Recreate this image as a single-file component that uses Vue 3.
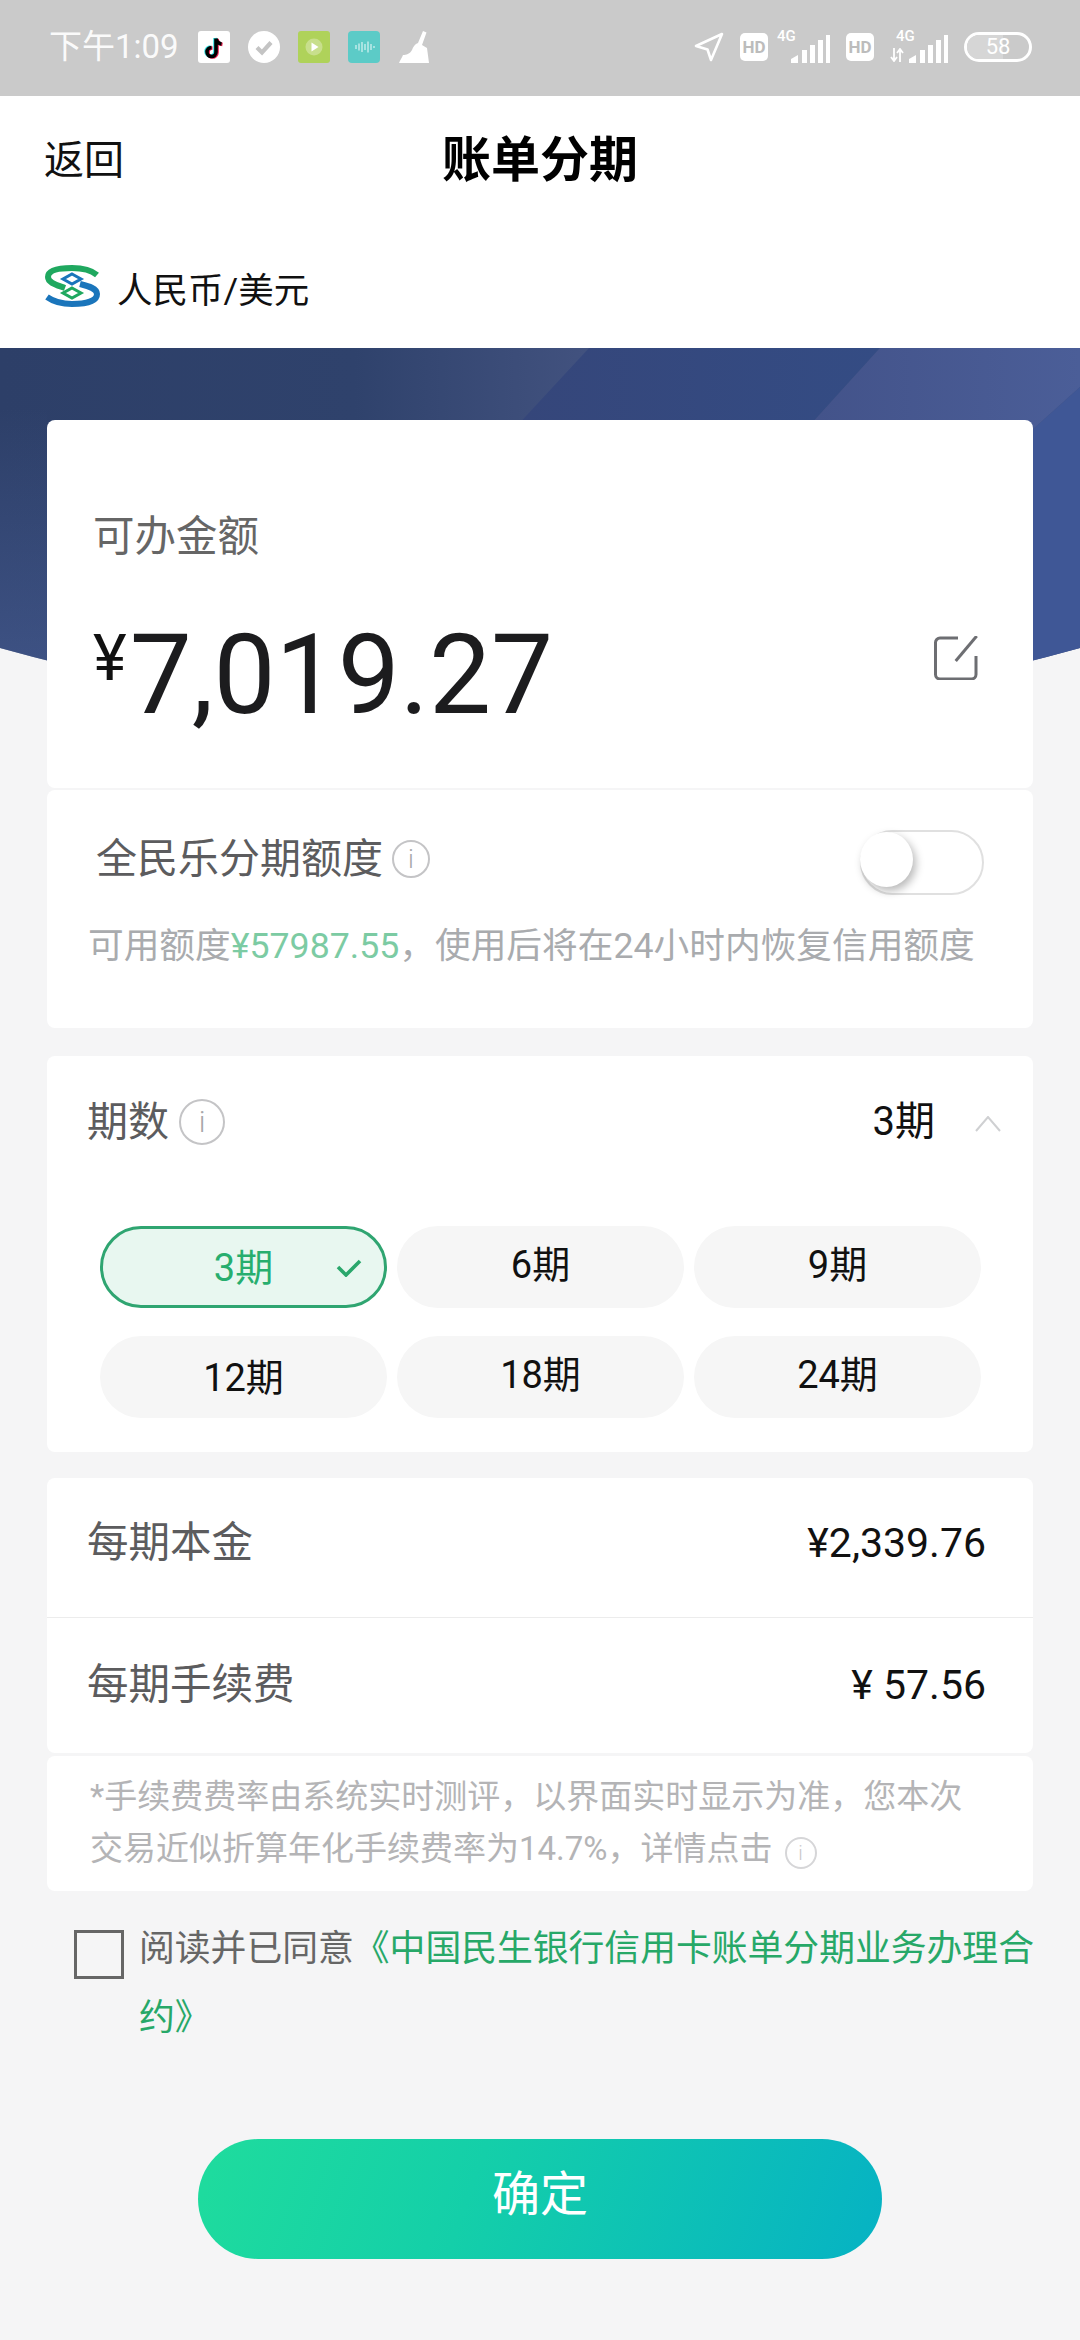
<template>
  <div class="page">
    <!-- status bar -->
    <div class="status-bar">
      <div class="status-left">
        <span class="time">下午1:09</span>
        <svg class="app-icon" viewBox="0 0 32 32">
          <rect width="32" height="32" rx="3" fill="#fff" />
          <path d="M17 7v13.500a4.500 4.500 0 1 1-4.500-4.500M17 7c.5 3 2.500 5 5.500 5.500" fill="none" stroke="#35e0e0" stroke-width="3.600" />
          <path d="M19 8v13.500a4.500 4.500 0 1 1-4.500-4.500M19 8c.5 3 2.500 5 5.500 5.500" fill="none" stroke="#ee1d52" stroke-width="3.600" />
          <path d="M18 7.500v13.500a4.500 4.500 0 1 1-4.500-4.500M18 7.500c.5 3 2.500 5 5.500 5.500" fill="none" stroke="#000" stroke-width="3.600" />
        </svg>
        <svg class="app-icon" viewBox="0 0 32 32">
          <circle cx="16" cy="16" r="16" fill="#fff" />
          <path d="M9 16.500l5 5 9-10" fill="none" stroke="#c4c4c4" stroke-width="4.200" />
        </svg>
        <svg class="app-icon" viewBox="0 0 32 32">
          <rect width="32" height="32" rx="3" fill="#afd25a" />
          <circle cx="16" cy="16" r="8.500" fill="#c8df8c" />
          <path d="M13.500 11.500l7 4.500-7 4.500z" fill="#fff" />
        </svg>
        <svg class="app-icon" viewBox="0 0 32 32">
          <rect width="32" height="32" rx="4" fill="#5ccbc7" />
          <path d="M8 14v4M11 12.500v7M14 11v10M17 13v6M20 10.500v11M23 13v6M26 15v2" stroke="#d8f4f2" stroke-width="1.200" fill="none" />
        </svg>
        <svg class="app-icon" viewBox="0 0 32 32">
          <path d="M20 12L25 0l3.500 1.500L24 14l5 3 2 15H1c1-3 3-5 4-8 3 0 7-1 9-5 1-3 3-6 6-7z" fill="#fff" />
        </svg>
      </div>
      <div class="status-right">
        <svg class="nav-arrow" viewBox="0 0 30 30">
          <path d="M2 14L28 2 17 28l-3.500-10.500z" fill="none" stroke="#fff" stroke-width="2.600" stroke-linejoin="round" />
        </svg>
        <span class="hd">HD</span>
        <div class="signal signal-voice">
          <span class="net">4G</span>
          <svg class="bars" viewBox="0 0 40 28">
            <path d="M1 28v-4l7-4v8zM12 28V15h5v13zM20 28V10h5v18zM28 28V5h5v23zM36 28V0h4v28z" fill="#fff" />
          </svg>
        </div>
        <span class="hd">HD</span>
        <div class="signal signal-data">
          <span class="net">4G</span>
          <svg class="updown" viewBox="0 0 14 14">
            <path d="M4 0v12M1 9l3 4 3-4M10 14V2M7 5l3-4 3 4" fill="none" stroke="#fff" stroke-width="1.800" />
          </svg>
          <svg class="bars" viewBox="0 0 40 28">
            <path d="M1 28v-4l7-4v8zM12 28V15h5v13zM20 28V10h5v18zM28 28V5h5v23zM36 28V0h4v28z" fill="#fff" />
          </svg>
        </div>
        <div class="battery">
          <span class="battery-fill"></span>
          <span class="battery-num">58</span>
        </div>
      </div>
    </div>

    <!-- header -->
    <div class="nav">
      <span class="back">返回</span>
      <span class="title">账单分期</span>
      <span></span>
    </div>
    <div class="currency">
      <svg class="bank-logo" viewBox="0 0 56 42">
        <path d="M53 10C46 4 37 3 28 3 14 3 4 5 4 12c0 6 9 8 17 11" fill="none" stroke="#1fa85f" stroke-width="6" />
        <path d="M3 32c7 5 17 7 25 7 14 0 25-3 25-10 0-6-9-8-17-10" fill="none" stroke="#1a75bb" stroke-width="6" />
        <path d="M28 9l9 5-9 5-9-5z" fill="none" stroke="#1a75bb" stroke-width="3" />
        <path d="M28 23l9 5-9 5-9-5z" fill="none" stroke="#1fa85f" stroke-width="3" />
      </svg>
      <span class="currency-name">人民币/美元</span>
    </div>

    <div class="main">
      <!-- blue backdrop behind the first card -->
      <svg class="hero-bg" viewBox="0 0 1080 380" preserveAspectRatio="none">
        <defs>
          <linearGradient id="facetA" gradientUnits="userSpaceOnUse" x1="0" y1="0" x2="590" y2="0">
            <stop offset="0" stop-color="#2d3f68" />
            <stop offset="0.6" stop-color="#2f426c" />
            <stop offset="1" stop-color="#42527f" />
          </linearGradient>
          <linearGradient id="facetB" gradientUnits="userSpaceOnUse" x1="520" y1="0" x2="880" y2="0">
            <stop offset="0" stop-color="#35467a" />
            <stop offset="1" stop-color="#344c84" />
          </linearGradient>
          <linearGradient id="facetC" gradientUnits="userSpaceOnUse" x1="816" y1="0" x2="1080" y2="0">
            <stop offset="0" stop-color="#43538a" />
            <stop offset="1" stop-color="#4b5e98" />
          </linearGradient>
          <linearGradient id="facetShade" x1="0" y1="0" x2="0" y2="1">
            <stop offset="0" stop-color="#4a6099" stop-opacity="0" />
            <stop offset="1" stop-color="#4a6099" stop-opacity="0.7" />
          </linearGradient>
          <clipPath id="heroClip">
            <path d="M0 0H1080V300Q540 450 0 300Z" />
          </clipPath>
        </defs>
        <g clip-path="url(#heroClip)">
          <rect width="1080" height="380" fill="url(#facetA)" />
          <rect y="60" width="47" height="320" fill="url(#facetShade)" />
          <path d="M589 0H880L536 380H237Z" fill="url(#facetB)" />
          <path d="M880 0H1080V39L700 380H536Z" fill="url(#facetC)" />
          <path d="M1080 39V380H700Z" fill="#3f5796" />
        </g>
      </svg>

      <section class="card amount-card">
        <div class="muted-label">可办金额</div>
        <div class="amount-row">
          <div class="amount"><span class="yen">¥</span>7,019.27</div>
          <svg class="edit-icon" viewBox="0 0 44 44">
            <path d="M24 2H6a4.500 4.500 0 0 0-4.500 4.500V38.500A4.500 4.500 0 0 0 6 43h31.500a4.500 4.500 0 0 0 4.500-4.500V20" fill="none" stroke="#6d6e72" stroke-width="3" />
            <path d="M21.700 25L42.700 0" fill="none" stroke="#6d6e72" stroke-width="3" />
          </svg>
        </div>
      </section>

      <section class="card quota-card">
        <div class="quota-row">
          <div class="quota-label">全民乐分期额度<span class="info info-md">i</span></div>
          <div class="switch"><span class="knob"></span></div>
        </div>
        <div class="quota-note">可用额度<span class="green-light">¥57987.55</span>，使用后将在24小时内恢复信用额度</div>
      </section>

      <section class="card period-card">
        <div class="period-head">
          <div class="period-label">期数<span class="info info-lg">i</span></div>
          <div class="period-value">
            <span>3期</span>
            <svg class="chevron" viewBox="0 0 26 16">
              <path d="M1 15L13 1l12 14" fill="none" stroke="#cfd0d2" stroke-width="2" />
            </svg>
          </div>
        </div>
        <div class="period-grid">
          <div
            v-for="(p, i) in periods"
            :key="p"
            class="pill"
            :class="{ active: p === selected, 'first-col': i % 3 === 0 }"
          >
            <span>{{ p }}期</span>
            <svg v-if="p === selected" class="check" viewBox="0 0 26 18">
              <path d="M2 8l8 8L24 2" fill="none" stroke="#2aa76c" stroke-width="3.600" />
            </svg>
          </div>
        </div>
      </section>

      <section class="card fee-card">
        <div v-for="row in feeRows" :key="row.label" class="fee-row">
          <span class="fee-label">{{ row.label }}</span>
          <span class="fee-value">{{ row.value }}</span>
        </div>
      </section>

      <section class="card note-card">
        <p>*手续费费率由系统实时测评，以界面实时显示为准，您本次<br />交易近似折算年化手续费率为14.7%，详情点击<span class="info info-sm">i</span></p>
      </section>

      <div class="agree">
        <span class="checkbox"></span>
        <p>阅读并已同意<span class="link">《中国民生银行信用卡账单分期业务办理合约》</span></p>
      </div>

      <div class="submit">确定</div>
    </div>
  </div>
</template>

<script setup>
const selected = 3
const periods = [3, 6, 9, 12, 18, 24]
const feeRows = [
  { label: '每期本金', value: '¥2,339.76' },
  { label: '每期手续费', value: '¥ 57.56' },
]
</script>

<style>
html,
body {
  margin: 0;
  background: #f5f5f6;
}
</style>

<style scoped>
.page {
  width: 1080px;
  height: 2340px;
  background: #f5f5f6;
  font-family: Roboto, "Noto Sans CJK SC", sans-serif;
  color: #111;
  overflow: hidden;
}

/* status bar */
.status-bar {
  height: 96px;
  background: #cacaca;
  display: flex;
  justify-content: space-between;
  align-items: center;
  padding: 0 48px 3px 49px;
  box-sizing: border-box;
  color: #fff;
}
.status-left,
.status-right {
  display: flex;
  align-items: center;
}
.status-left { gap: 18px; }
.status-right { gap: 16px; }
.time {
  font-size: 33px;
  line-height: 40px;
  width: 131px;
  white-space: nowrap;
  opacity: 0.92;
}
.app-icon {
  width: 32px;
  height: 32px;
  display: block;
}
.nav-arrow {
  width: 30px;
  height: 30px;
}
.hd {
  width: 28px;
  height: 28px;
  background: #fff;
  border-radius: 5px;
  color: #bcbcbc;
  font-size: 17px;
  font-weight: 700;
  line-height: 28px;
  text-align: center;
}
.signal {
  position: relative;
  width: 53px;
  height: 32px;
  display: flex;
  justify-content: flex-end;
  align-items: flex-end;
}
.signal-voice { margin-left: -7px; }
.signal-data { width: 58px; }
.bars {
  width: 40px;
  height: 28px;
  display: block;
}
.net {
  position: absolute;
  left: 0;
  top: -3px;
  font-size: 15px;
  line-height: 16px;
  font-weight: 500;
}
.signal-data .net { left: 6px; }
.updown {
  position: absolute;
  left: 0;
  bottom: 1px;
  width: 14px;
  height: 14px;
}
.battery {
  position: relative;
  width: 68px;
  height: 30px;
  border: 3px solid #fff;
  border-radius: 15px;
  box-sizing: border-box;
  display: flex;
  align-items: center;
  justify-content: center;
  overflow: hidden;
}
.battery-fill {
  position: absolute;
  left: 0;
  top: 0;
  bottom: 0;
  width: 58%;
  background: #d6d6d6;
}
.battery-num {
  position: relative;
  font-size: 22px;
  line-height: 24px;
}

/* header */
.nav {
  height: 128px;
  background: #fff;
  display: grid;
  grid-template-columns: 1fr auto 1fr;
  align-items: center;
  padding: 2px 44px 0;
  box-sizing: border-box;
}
.back {
  font-size: 40px;
  line-height: 56px;
}
.title {
  font-size: 49px;
  line-height: 64px;
  font-weight: 700;
  color: #000;
}
.currency {
  height: 124px;
  background: #fff;
  display: flex;
  align-items: center;
  padding: 0 44px;
  box-sizing: border-box;
  font-size: 35.500px;
  gap: 18px;
}
.currency-name {
  margin-top: 2px;
  margin-left: -1px;
}
.bank-logo {
  width: 56px;
  height: 42px;
}

/* main */
.main {
  position: relative;
  padding: 72px 47px 0;
}
.hero-bg {
  position: absolute;
  left: 0;
  top: 0;
  width: 1080px;
  height: 380px;
}
.card {
  position: relative;
  background: #fff;
  border-radius: 8px;
}
.amount-card {
  height: 368px;
  padding: 89px 46px 0;
  box-sizing: border-box;
}
.muted-label {
  font-size: 41.500px;
  line-height: 56px;
  color: #666;
}
.amount-row {
  margin-top: 48px;
  display: flex;
  justify-content: space-between;
  align-items: flex-start;
}
.amount {
  font-size: 110.500px;
  line-height: 124px;
  color: #1c1c1e;
  display: flex;
  align-items: flex-start;
}
.yen {
  font-size: 64px;
  line-height: 92px;
  font-weight: 400;
  color: #111;
  margin-right: 3px;
}
.edit-icon {
  width: 44px;
  height: 44px;
  margin-right: 9px;
  margin-top: 23px;
}

.quota-card {
  margin-top: 2px;
  height: 238px;
  padding: 40px 49px 0 41px;
  box-sizing: border-box;
}
.quota-row {
  display: flex;
  justify-content: space-between;
  align-items: center;
  height: 65px;
  padding-left: 8px;
}
.quota-label {
  font-size: 41px;
  line-height: 56px;
  color: #5c5c5e;
  display: flex;
  align-items: center;
  margin-top: -8px;
}
.switch {
  position: relative;
  width: 124px;
  height: 65px;
  border: 2px solid #e0e0e0;
  border-radius: 33px;
  box-sizing: border-box;
}
.knob {
  position: absolute;
  left: -2px;
  top: 0;
  width: 53px;
  height: 55px;
  background: #fff;
  border-radius: 50%;
  box-shadow: 3px 4px 8px rgba(0, 0, 0, 0.28);
}
.quota-note {
  margin-top: 26px;
  font-size: 35.700px;
  line-height: 50px;
  color: #a9abae;
  white-space: nowrap;
}
.green-light { color: #7ccba3; }

.info {
  display: inline-block;
  border: 2px solid #c4c4c6;
  border-radius: 50%;
  box-sizing: border-box;
  text-align: center;
  color: #a8a8aa;
  font-weight: 300;
  flex: none;
}
.info-md {
  width: 38px;
  height: 38px;
  font-size: 26px;
  line-height: 34px;
  margin-left: 9px;
}
.info-lg {
  width: 46px;
  height: 46px;
  font-size: 30px;
  line-height: 42px;
  margin-left: 10px;
}
.info-sm {
  width: 32px;
  height: 32px;
  font-size: 20px;
  line-height: 28px;
  margin-left: 12px;
  vertical-align: 0;
  border-color: #d6d6d8;
  color: #c8c8ca;
}

.period-card {
  margin-top: 28px;
  height: 396px;
  padding: 40px 52px 0 40px;
  box-sizing: border-box;
}
.period-head {
  display: flex;
  justify-content: space-between;
  align-items: center;
  height: 52px;
}
.period-label {
  font-size: 41px;
  line-height: 52px;
  color: #5c5c5e;
  display: flex;
  align-items: center;
}
.period-value {
  display: flex;
  align-items: center;
  font-size: 40px;
  line-height: 52px;
  color: #111;
  gap: 40px;
  margin-right: -20px;
}
.chevron {
  width: 26px;
  height: 16px;
  margin-top: 4px;
}
.period-grid {
  margin-top: 78px;
  padding-left: 13px;
  display: grid;
  grid-template-columns: repeat(3, 287px);
  grid-auto-rows: 82px;
  column-gap: 10px;
  row-gap: 28px;
}
.pill {
  position: relative;
  background: #f6f6f6;
  border-radius: 41px;
  font-size: 38px;
  color: #111;
  display: flex;
  align-items: center;
  justify-content: center;
  padding-bottom: 12px;
  box-sizing: border-box;
}
.pill.first-col {
  padding-bottom: 6px;
}
.pill.active {
  background: #e8f7f0;
  border: 3px solid #2fa571;
  color: #27ae6e;
}
.check {
  position: absolute;
  right: 22px;
  top: 30px;
  width: 26px;
  height: 18px;
}

.fee-card {
  margin-top: 26px;
  height: 275px;
}
.fee-row {
  height: 139px;
  padding: 0 47px 9px 40px;
  box-sizing: border-box;
  display: flex;
  justify-content: space-between;
  align-items: center;
}
.fee-row + .fee-row {
  height: 136px;
  padding-bottom: 2px;
  border-top: 1px solid #ececec;
}
.fee-label {
  font-size: 41.500px;
  line-height: 56px;
  color: #5c5c5e;
}
.fee-value {
  font-size: 41px;
  line-height: 56px;
  color: #111;
}

.note-card {
  margin-top: 3px;
  height: 135px;
  padding: 15px 20px 0 43px;
  box-sizing: border-box;
}
.note-card p {
  margin: 0;
  font-size: 33px;
  line-height: 52px;
  color: #b4b4b6;
  white-space: nowrap;
}

.agree {
  margin-top: 39px;
  margin-right: -6px;
  padding-left: 27px;
  display: flex;
  align-items: flex-start;
  gap: 15px;
}
.checkbox {
  flex: none;
  width: 50px;
  height: 49px;
  border: 3px solid #666;
  box-sizing: border-box;
}
.agree p {
  margin: -15px 0 0;
  font-size: 35.800px;
  line-height: 69px;
  color: #666;
}
.link { color: #27a868; }

.submit {
  margin: 86px auto 0;
  width: 684px;
  height: 120px;
  border-radius: 60px;
  background: linear-gradient(110deg, #1fdc9d 0%, #14cfa9 40%, #06b2c4 100%);
  color: #fff;
  font-size: 48px;
  line-height: 112px;
  text-align: center;
}
</style>
